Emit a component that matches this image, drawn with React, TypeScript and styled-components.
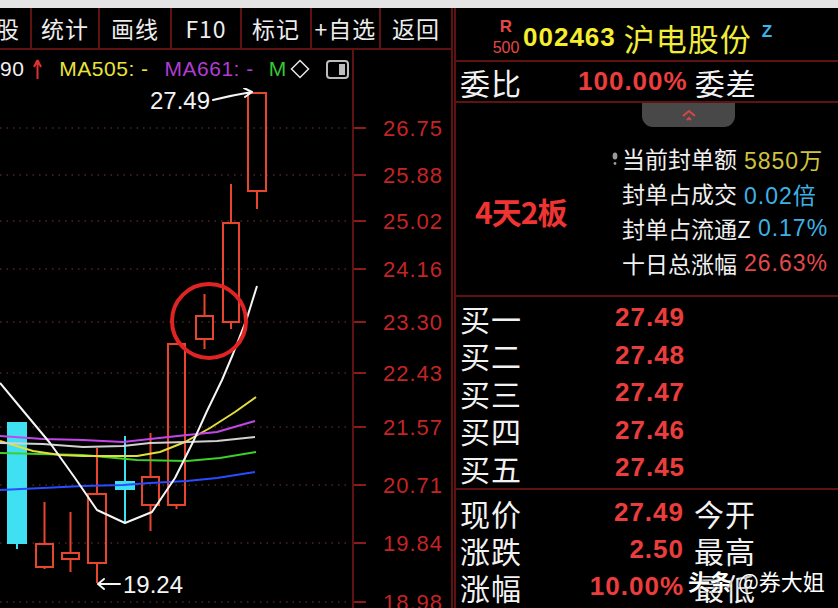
import React from "react"
import styled, { createGlobalStyle } from "styled-components"

const LINE = "#5e1212"
const RED = "#e8452f"
const CYAN = "#3fe0f2"

const GlobalStyle = createGlobalStyle`
  * { box-sizing: border-box; }
  html, body { margin: 0; padding: 0; background: #000; }
  body { font-family: "Noto Sans CJK SC", "Liberation Sans", sans-serif; }
`

const Screen = styled.div`
  position: relative;
  width: 838px;
  height: 608px;
  overflow: hidden;
  background: #000;
  display: flex;
  flex-direction: column;
`

const TopStrip = styled.div`
  height: 8px;
  flex: none;
  background: #e4e4e4;
`

const Body = styled.div`
  flex: 1;
  display: flex;
  min-height: 0;
`

/* ---------- left: toolbar + kline ---------- */

const LeftPanel = styled.div`
  width: 453px;
  flex: none;
  display: flex;
  flex-direction: column;
  border-right: 2px solid ${LINE};
`

const Toolbar = styled.div`
  height: 42px;
  flex: none;
  display: flex;
  border-bottom: 2px solid ${LINE};
`

const ToolButton = styled.div<{ $w: number; $shift?: number; $last?: boolean }>`
  width: ${p => p.$w}px;
  flex: none;
  margin-left: ${p => p.$shift ?? 0}px;
  border-right: ${p => (p.$last ? "none" : `2px solid ${LINE}`)};
  display: flex;
  align-items: center;
  justify-content: center;
  color: #ededed;
  font-size: 23px;
  letter-spacing: 1px;
  white-space: nowrap;
`

const Workspace = styled.div`
  flex: 1;
  display: flex;
  min-height: 0;
`

const ChartColumn = styled.div`
  width: 352px;
  flex: none;
  display: flex;
  flex-direction: column;
`

const MARow = styled.div`
  height: 38px;
  flex: none;
  display: flex;
  align-items: center;
  font-family: "Liberation Sans", sans-serif;
  font-size: 21px;
  white-space: nowrap;
`

const Legend = styled.span<{ $color: string; $ml?: number }>`
  color: ${p => p.$color};
  margin-left: ${p => p.$ml ?? 0}px;
  letter-spacing: 0.5px;
  display: flex;
  align-items: center;
`

const ChartSvg = styled.svg`
  display: block;
  flex: none;
`

const Axis = styled.div`
  flex: 1;
  border-left: 2px solid ${LINE};
`

/* ---------- right: quote panel ---------- */

const RightPanel = styled.div`
  flex: 1;
  min-width: 0;
  margin-left: 1px;
  border-left: 2px solid ${LINE};
  display: flex;
  flex-direction: column;
`

const Header = styled.div`
  height: 54px;
  flex: none;
  display: flex;
  align-items: center;
  padding: 6px 0 0 36px;
  border-bottom: 2px solid ${LINE};
`

const Market = styled.div`
  width: 28px;
  display: flex;
  flex-direction: column;
  align-items: center;
  gap: 5px;
  color: #e24848;
  font-family: "Liberation Sans", sans-serif;
  line-height: 1;
  b { font-size: 17px; }
  span { font-size: 16px; }
`

const Code = styled.span`
  margin-left: 3px;
  color: #f4ee2e;
  font-family: "Liberation Sans", sans-serif;
  font-weight: 700;
  font-size: 26px;
  letter-spacing: 1px;
`

const StockName = styled.span`
  margin-left: 8px;
  color: #f0ec3c;
  font-size: 31px;
  line-height: 1;
  letter-spacing: 1px;
`

const Sup = styled.span`
  align-self: flex-start;
  margin: 8px 0 0 10px;
  color: #3ab6ea;
  font-family: "Liberation Sans", sans-serif;
  font-weight: 700;
  font-size: 17px;
`

const Row = styled.div<{ $h: number; $border?: boolean }>`
  height: ${p => p.$h}px;
  flex: none;
  display: flex;
  align-items: center;
  padding-left: 4px;
  border-bottom: ${p => (p.$border ? `2px solid ${LINE}` : "none")};
`

const BigLabel = styled.span<{ $w?: number; $ml?: number }>`
  width: ${p => (p.$w ? `${p.$w}px` : "auto")};
  flex: none;
  margin-left: ${p => p.$ml ?? 0}px;
  color: #f2f2f2;
  font-size: 30px;
  line-height: 1;
  letter-spacing: 1px;
  white-space: nowrap;
`

const Price = styled.span<{ $w?: number; $ml?: number; $right?: boolean }>`
  width: ${p => (p.$w ? `${p.$w}px` : "auto")};
  flex: none;
  margin-left: ${p => p.$ml ?? 0}px;
  text-align: ${p => (p.$right ? "right" : "left")};
  color: #ec3d3d;
  font-family: "Liberation Sans", sans-serif;
  font-weight: 700;
  font-size: 26px;
  letter-spacing: 1px;
  white-space: nowrap;
`

const InfoBlock = styled.div`
  height: 194px;
  flex: none;
  display: flex;
  flex-direction: column;
  border-bottom: 2px solid ${LINE};
`

const CollapseTab = styled.div`
  width: 93px;
  height: 24px;
  flex: none;
  margin-left: 186px;
  background: #484848;
  border-radius: 0 0 11px 11px;
  display: flex;
  align-items: center;
  justify-content: center;
`

const InfoContent = styled.div`
  display: flex;
  align-items: center;
  padding: 14px 0 0 19px;
`

const Boards = styled.div`
  width: 137px;
  flex: none;
  color: #f03434;
  font-size: 30px;
  font-weight: 700;
  letter-spacing: -1px;
  white-space: nowrap;
`

const StatList = styled.div`
  display: flex;
  flex-direction: column;
`

const Stat = styled.div`
  height: 35px;
  display: flex;
  align-items: center;
  white-space: nowrap;
`

const StatMark = styled.span`
  width: 10px;
  flex: none;
  display: flex;
  align-items: center;
`

const StatLabel = styled.span`
  color: #f0f0f0;
  font-size: 23px;
  line-height: 1;
`

const StatValue = styled.span<{ $color: string }>`
  margin-left: 7px;
  color: ${p => p.$color};
  font-family: "Liberation Sans", "Noto Sans CJK SC", sans-serif;
  font-size: 23px;
  letter-spacing: 1px;
`

const BuyBlock = styled.div`
  height: 193px;
  flex: none;
  padding-top: 2px;
  border-bottom: 2px solid ${LINE};
`

const QuoteBlock = styled.div`
  flex: 1;
  padding-top: 4px;
`

const Watermark = styled.div`
  position: absolute;
  left: 688px;
  top: 566px;
  color: #fff;
  font-size: 22px;
  line-height: 28px;
  white-space: nowrap;
  text-shadow: 0 0 3px rgba(0, 0, 0, 0.8);
  b { font-weight: 700; margin-right: 6px; }
`

/* ---------- data ---------- */

const tools = [
  { label: "选股", w: 70, shift: -38 },
  { label: "统计", w: 68 },
  { label: "画线", w: 72 },
  { label: "F10", w: 70 },
  { label: "标记", w: 70 },
  { label: "+自选", w: 69 },
  { label: "返回", w: 70, last: true },
]

const levels = [
  { y: 128, v: "26.75" },
  { y: 175, v: "25.88" },
  { y: 221, v: "25.02" },
  { y: 269, v: "24.16" },
  { y: 322, v: "23.30" },
  { y: 373, v: "22.43" },
  { y: 427, v: "21.57" },
  { y: 485, v: "20.71" },
  { y: 543, v: "19.84" },
  { y: 602, v: "18.98" },
]

// x0,x1 body; top/bottom body; hi/lo wick; up = hollow red
const candles = [
  { x0: 8, x1: 26, top: 423, bot: 543, hi: 423, lo: 549, up: false },
  { x0: 36, x1: 53, top: 544, bot: 567, hi: 502, lo: 569, up: true },
  { x0: 62, x1: 79, top: 553, bot: 559, hi: 512, lo: 572, up: true },
  { x0: 88, x1: 106, top: 494, bot: 563, hi: 448, lo: 583, up: true },
  { x0: 116, x1: 134, top: 482, bot: 489, hi: 436, lo: 523, up: false },
  { x0: 142, x1: 159, top: 477, bot: 505, hi: 433, lo: 531, up: true },
  { x0: 168, x1: 185, top: 344, bot: 505, hi: 344, lo: 509, up: true },
  { x0: 196, x1: 213, top: 316, bot: 339, hi: 294, lo: 349, up: true },
  { x0: 223, x1: 239, top: 223, bot: 322, hi: 184, lo: 329, up: true },
  { x0: 248, x1: 266, top: 93, bot: 191, hi: 93, lo: 209, up: true },
]

const maLines = [
  { color: "#2a4cff", pts: "0,490 43,488 83,486 123,485 150,483 187,481 217,478 255,472" },
  { color: "#3fcf2c", pts: "0,453 40,454 83,455 137,460 187,461 220,458 256,452" },
  { color: "#e4de3c", pts: "0,441 33,451 60,455 83,456 137,456 160,452 185,442 210,428 235,412 256,397" },
  { color: "#d2d2d2", pts: "0,443 43,444 83,447 123,446 150,443 187,442 217,441 255,437" },
  { color: "#c446e8", pts: "0,436 43,439 83,440 123,442 150,439 187,435 217,432 255,421" },
  { color: "#f6f6f6", pts: "0,383 25,413 50,443 75,478 97,510 125,523 152,512 175,478 193,442 207,411 222,380 233,354 247,318 257,286" },
]

const bids = [
  { label: "买一", price: "27.49" },
  { label: "买二", price: "27.48" },
  { label: "买三", price: "27.47" },
  { label: "买四", price: "27.46" },
  { label: "买五", price: "27.45" },
]

const quotes = [
  { label: "现价", value: "27.49", side: "今开" },
  { label: "涨跌", value: "2.50", side: "最高" },
  { label: "涨幅", value: "10.00%", side: "最低" },
]

const stats = [
  { label: "当前封单额", value: "5850万", color: "#cfc23e", mark: true },
  { label: "封单占成交", value: "0.02倍", color: "#3db2e4" },
  { label: "封单占流通Z", value: "0.17%", color: "#3db2e4" },
  { label: "十日总涨幅", value: "26.63%", color: "#e24a4a" },
]

/* ---------- drawings ---------- */

function KLine() {
  return (
    <ChartSvg width={352} height={520} viewBox="0 88 352 520">
      {levels.map(l => (
        <line key={l.v} x1={0} x2={350} y1={l.y} y2={l.y} stroke="#4e2626" strokeWidth={1.5} strokeDasharray="1.5 5" />
      ))}
      {candles.map((c, i) => {
        const mid = (c.x0 + c.x1) / 2
        const color = c.up ? RED : CYAN
        return (
          <g key={i} stroke={color} strokeWidth={2}>
            {c.hi < c.top && <line x1={mid} x2={mid} y1={c.hi} y2={c.top} />}
            {c.lo > c.bot && <line x1={mid} x2={mid} y1={c.bot} y2={c.lo} />}
            <rect x={c.x0} y={c.top} width={c.x1 - c.x0} height={Math.max(c.bot - c.top, 2)} fill={c.up ? "none" : CYAN} />
          </g>
        )
      })}
      {maLines.map((m, i) => (
        <polyline key={i} points={m.pts} fill="none" stroke={m.color} strokeWidth={2} strokeLinejoin="round" />
      ))}
      <circle cx={209} cy={321} r={37} fill="none" stroke="#e02424" strokeWidth={4} />
      <text x={150} y={109} fill="#f4f4f4" fontSize={24} fontFamily="Liberation Sans, sans-serif">27.49</text>
      <path d="M213 100 Q233 95 252 92 M252 92 L244 88 M252 92 L245 97" stroke="#f4f4f4" strokeWidth={2} fill="none" strokeLinecap="round" />
      <path d="M120 584 L98 584 M98 584 L104 579 M98 584 L104 589" stroke="#f4f4f4" strokeWidth={2} fill="none" strokeLinecap="round" />
      <text x={123} y={593} fill="#f4f4f4" fontSize={24} fontFamily="Liberation Sans, sans-serif">19.24</text>
    </ChartSvg>
  )
}

function PriceAxis() {
  return (
    <svg width={97} height={558} viewBox="354 50 97 558" style={{ display: "block" }}>
      {levels.map(l => (
        <g key={l.v}>
          <line x1={354} x2={366} y1={l.y} y2={l.y} stroke="#8a1c1c" strokeWidth={2} />
          <text x={413} y={l.y + 8} textAnchor="middle" fill="#c42424" fontSize={22} letterSpacing={1} fontFamily="Liberation Sans, sans-serif">
            {l.v}
          </text>
        </g>
      ))}
    </svg>
  )
}

const UpArrow = () => (
  <svg width={9} height={22} viewBox="0 0 9 22">
    <path d="M4.5 2 L4.5 21 M4.5 2 L1 9 M4.5 2 L8 9" stroke="#e03030" strokeWidth={2} fill="none" />
  </svg>
)

const Diamond = () => (
  <svg width={20} height={20} viewBox="0 0 20 20">
    <path d="M10 1.5 L18.5 10 L10 18.5 L1.5 10 Z" stroke="#e6e6e6" strokeWidth={1.5} fill="none" />
  </svg>
)

const PanelToggle = () => (
  <svg width={23} height={19} viewBox="0 0 23 19">
    <rect x={1} y={1} width={21} height={17} rx={3} stroke="#bdbdbd" strokeWidth={2} fill="none" />
    <rect x={13} y={4} width={6} height={11} fill="#bdbdbd" />
  </svg>
)

const Chevron = () => (
  <svg width={18} height={14} viewBox="0 0 18 14">
    <path d="M3 8 L9 3 L15 8" stroke="#d84646" strokeWidth={2} fill="none" />
    <path d="M7 12 L9 10 L11 12" stroke="#d84646" strokeWidth={2} fill="none" />
  </svg>
)

const Hint = () => (
  <svg width={6} height={14} viewBox="0 0 6 14">
    <ellipse cx={3} cy={4} rx={2.4} ry={3.6} fill="#9a9a9a" />
    <circle cx={3} cy={11.5} r={1.4} fill="#9a9a9a" />
  </svg>
)

export default function App() {
  return (
    <Screen>
      <GlobalStyle />
      <TopStrip />
      <Body>
        <LeftPanel>
          <Toolbar>
            {tools.map(t => (
              <ToolButton key={t.label} $w={t.w} $shift={t.shift} $last={t.last}>{t.label}</ToolButton>
            ))}
          </Toolbar>
          <Workspace>
            <ChartColumn>
              <MARow>
                <Legend $color="#f0f0f0">90</Legend>
                <Legend $color="#e03030" $ml={9}><UpArrow /></Legend>
                <Legend $color="#e8e43a" $ml={17}>MA505: -</Legend>
                <Legend $color="#b03cd4" $ml={16}>MA661: -</Legend>
                <Legend $color="#34c834" $ml={15}>M</Legend>
                <Legend $color="#e6e6e6" $ml={3}><Diamond /></Legend>
                <Legend $color="#bdbdbd" $ml={16}><PanelToggle /></Legend>
              </MARow>
              <KLine />
            </ChartColumn>
            <Axis>
              <PriceAxis />
            </Axis>
          </Workspace>
        </LeftPanel>

        <RightPanel>
          <Header>
            <Market>
              <b>R</b>
              <span>500</span>
            </Market>
            <Code>002463</Code>
            <StockName>沪电股份</StockName>
            <Sup>Z</Sup>
          </Header>

          <Row $h={41} $border>
            <BigLabel>委比</BigLabel>
            <Price $ml={56}>100.00%</Price>
            <BigLabel $ml={7}>委差</BigLabel>
          </Row>

          <InfoBlock>
            <CollapseTab><Chevron /></CollapseTab>
            <InfoContent>
              <Boards>4天2板</Boards>
              <StatList>
                {stats.map(s => (
                  <Stat key={s.label}>
                    <StatMark>{s.mark && <Hint />}</StatMark>
                    <StatLabel>{s.label}</StatLabel>
                    <StatValue $color={s.color}>{s.value}</StatValue>
                  </Stat>
                ))}
              </StatList>
            </InfoContent>
          </InfoBlock>

          <BuyBlock>
            {bids.map(b => (
              <Row key={b.label} $h={37.5}>
                <BigLabel $w={155}>{b.label}</BigLabel>
                <Price>{b.price}</Price>
              </Row>
            ))}
          </BuyBlock>

          <QuoteBlock>
            {quotes.map(q => (
              <Row key={q.label} $h={37}>
                <BigLabel $w={100}>{q.label}</BigLabel>
                <Price $w={124} $right>{q.value}</Price>
                <BigLabel $ml={10}>{q.side}</BigLabel>
              </Row>
            ))}
          </QuoteBlock>
        </RightPanel>
      </Body>
      <Watermark><b>头条</b>@券大姐</Watermark>
    </Screen>
  )
}
